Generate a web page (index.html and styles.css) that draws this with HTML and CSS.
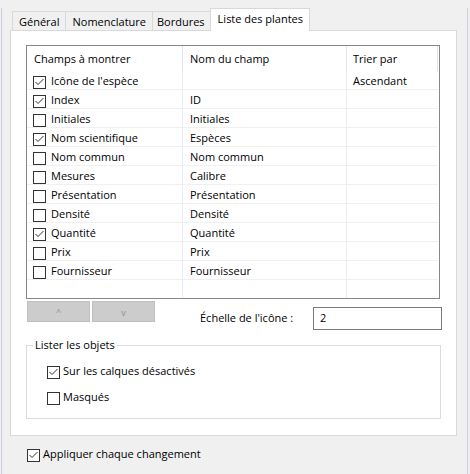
FILE: index.html
```html
<!DOCTYPE html>
<html lang="fr">
<head>
<meta charset="utf-8">
<title>Liste des plantes</title>
<link rel="stylesheet" href="styles.css">
</head>
<body>
<div class="window">
  <div class="tabs">
    <div class="tab">Général</div>
    <div class="tab">Nomenclature</div>
    <div class="tab tab-tight">Bordures</div>
    <div class="tab tab-active">Liste des plantes</div>
  </div>
  <div class="panel">
    <div class="list">
      <div class="list-row list-head">
        <div class="cell c1">Champs à montrer</div>
        <div class="cell c2">Nom du champ</div>
        <div class="cell c3">Trier par</div>
      </div>
      <div class="list-body">
        <div class="list-row">
          <div class="cell c1"><span class="cb"><svg viewBox="0 0 11 11" width="11" height="11"><path d="M1.5 5 L4 7.5 L9.5 2" fill="none" stroke="#333" stroke-width="1"/></svg></span>Icône de l'espèce</div>
          <div class="cell c2"></div>
          <div class="cell c3">Ascendant</div>
        </div>
        <div class="list-row">
          <div class="cell c1"><span class="cb"><svg viewBox="0 0 11 11" width="11" height="11"><path d="M1.5 5 L4 7.5 L9.5 2" fill="none" stroke="#333" stroke-width="1"/></svg></span>Index</div>
          <div class="cell c2">ID</div>
          <div class="cell c3"></div>
        </div>
        <div class="list-row">
          <div class="cell c1"><span class="cb"></span>Initiales</div>
          <div class="cell c2">Initiales</div>
          <div class="cell c3"></div>
        </div>
        <div class="list-row">
          <div class="cell c1"><span class="cb"><svg viewBox="0 0 11 11" width="11" height="11"><path d="M1.5 5 L4 7.5 L9.5 2" fill="none" stroke="#333" stroke-width="1"/></svg></span>Nom scientifique</div>
          <div class="cell c2">Espèces</div>
          <div class="cell c3"></div>
        </div>
        <div class="list-row">
          <div class="cell c1"><span class="cb"></span>Nom commun</div>
          <div class="cell c2">Nom commun</div>
          <div class="cell c3"></div>
        </div>
        <div class="list-row">
          <div class="cell c1"><span class="cb"></span>Mesures</div>
          <div class="cell c2">Calibre</div>
          <div class="cell c3"></div>
        </div>
        <div class="list-row">
          <div class="cell c1"><span class="cb"></span>Présentation</div>
          <div class="cell c2">Présentation</div>
          <div class="cell c3"></div>
        </div>
        <div class="list-row">
          <div class="cell c1"><span class="cb"></span>Densité</div>
          <div class="cell c2">Densité</div>
          <div class="cell c3"></div>
        </div>
        <div class="list-row">
          <div class="cell c1"><span class="cb"><svg viewBox="0 0 11 11" width="11" height="11"><path d="M1.5 5 L4 7.5 L9.5 2" fill="none" stroke="#333" stroke-width="1"/></svg></span>Quantité</div>
          <div class="cell c2">Quantité</div>
          <div class="cell c3"></div>
        </div>
        <div class="list-row">
          <div class="cell c1"><span class="cb"></span>Prix</div>
          <div class="cell c2">Prix</div>
          <div class="cell c3"></div>
        </div>
        <div class="list-row">
          <div class="cell c1"><span class="cb"></span>Fournisseur</div>
          <div class="cell c2">Fournisseur</div>
          <div class="cell c3"></div>
        </div>
        <div class="list-row filler">
          <div class="cell c1"></div>
          <div class="cell c2"></div>
          <div class="cell c3"></div>
        </div>
      </div>
    </div>

    <div class="controls">
      <div class="btn btn-up">^</div>
      <div class="btn btn-down">v</div>
      <div class="scale-label">Échelle de l'icône :</div>
      <div class="field">2</div>
    </div>

    <fieldset class="group">
      <legend>Lister les objets</legend>
      <div class="group-body">
        <div class="check"><span class="cb"><svg viewBox="0 0 11 11" width="11" height="11"><path d="M1.5 5 L4 7.5 L9.5 2" fill="none" stroke="#333" stroke-width="1"/></svg></span>Sur les calques désactivés</div>
        <div class="check"><span class="cb"></span>Masqués</div>
      </div>
    </fieldset>
  </div>
  <div class="check apply"><span class="cb"><svg viewBox="0 0 11 11" width="11" height="11"><path d="M1.5 5 L4 7.5 L9.5 2" fill="none" stroke="#333" stroke-width="1"/></svg></span>Appliquer chaque changement</div>
</div>
</body>
</html>
```

FILE: styles.css
```css
* {
  box-sizing: border-box;
}

html,
body {
  margin: 0;
  padding: 0;
}

body {
  background: #f0f0f0;
  font-family: "Open Sans", "Noto Sans", sans-serif;
  font-size: 11px;
  line-height: 16px;
  color: #000;
}

.window {
  margin-left: 1px;
  width: 467px;
  height: 472px;
  border: 1px solid #c9cfe0;
  border-top: none;
  background: #f0f0f0;
}

/* Tabs */
.tabs {
  display: flex;
  align-items: flex-end;
  height: 22px;
  margin-top: 8px;
  padding-left: 10px;
}

.tab {
  height: 19px;
  padding: 2px 6px 0 6px;
  border: 1px solid #d9d9d9;
  border-bottom: none;
  margin-right: -1px;
  background: #f0f0f0;
  white-space: nowrap;
}

.tab-tight {
  padding: 2px 5px 0 4px;
}

.tab-active {
  position: relative;
  z-index: 1;
  height: 23px;
  margin-bottom: -1px;
  padding: 2px 6px 0 7px;
  background: #fff;
}

/* Panel */
.panel {
  margin-left: 8px;
  width: 447px;
  height: 406px;
  background: #fff;
  border: 1px solid #d9d9d9;
  padding: 14px 0 0 15px;
}

/* List view */
.list {
  width: 414px;
  height: 254px;
  border: 1px solid #828790;
  display: flex;
  flex-direction: column;
}

.list-row {
  display: grid;
  grid-template-columns: 156px 164px 91px;
  width: 411px;
}

.list-head {
  height: 25px;
}

.list-head .cell {
  border-right: 1px solid #e5e5e5;
  padding: 5px 0 0 7px;
}

.list-head .c3 {
  padding-left: 6px;
}

.list-body {
  flex: 1;
  display: flex;
  flex-direction: column;
}

.list-body .list-row {
  height: 19px;
  border-bottom: 1px solid #f0f0f0;
}

.list-body .list-row.filler {
  flex: 1;
  border-bottom: none;
}

.list-body .cell {
  display: flex;
  align-items: flex-start;
  padding-top: 2px;
  white-space: nowrap;
}

.list-body .c1 {
  padding-left: 6px;
  border-right: 1px solid #e8edf6;
}

.list-body .c1 .cb {
  margin-right: 5px;
}

.list-body .c2 {
  padding-left: 7px;
  border-right: 1px solid #e8edf6;
}

.list-body .c3 {
  padding-left: 6px;
}

/* Checkbox */
.cb {
  flex: none;
  display: inline-flex;
  width: 13px;
  height: 13px;
  margin-top: 3px;
  border: 1px solid #333;
  background: #fff;
}

.cb svg {
  display: block;
}

.check {
  display: flex;
  align-items: flex-start;
  white-space: nowrap;
}

.check .cb {
  margin-right: 3px;
}

/* Controls under the list */
.controls {
  display: flex;
  align-items: flex-start;
  width: 416px;
  margin-top: 2px;
}

.btn {
  width: 63px;
  height: 21px;
  background: #cccccc;
  border: 1px solid #bfbfbf;
  color: #7f9696;
  font-size: 9px;
  line-height: 10px;
  text-align: center;
}

.btn-up {
  margin-left: 1px;
  padding-top: 5px;
}

.btn-down {
  margin-left: 2px;
  padding-top: 6px;
}

.scale-label {
  margin-left: 45px;
  margin-top: 9px;
  white-space: nowrap;
}

.field {
  margin-left: auto;
  margin-top: 6px;
  width: 129px;
  height: 23px;
  border: 1px solid #7a7a7a;
  padding: 2px 0 0 6px;
  background: #fff;
}

/* Group box */
.group {
  margin: 7px 0 0 0;
  padding: 0;
  width: 415px;
  border: 1px solid #dcdcdc;
  min-inline-size: 0;
}

.group legend {
  margin-left: 6px;
  padding: 0 2px;
}

.group-body {
  display: flex;
  flex-direction: column;
  gap: 10px;
  padding: 10px 0 13px 20px;
}

/* Apply */
.apply {
  margin: 10px 0 0 25px;
}
```
